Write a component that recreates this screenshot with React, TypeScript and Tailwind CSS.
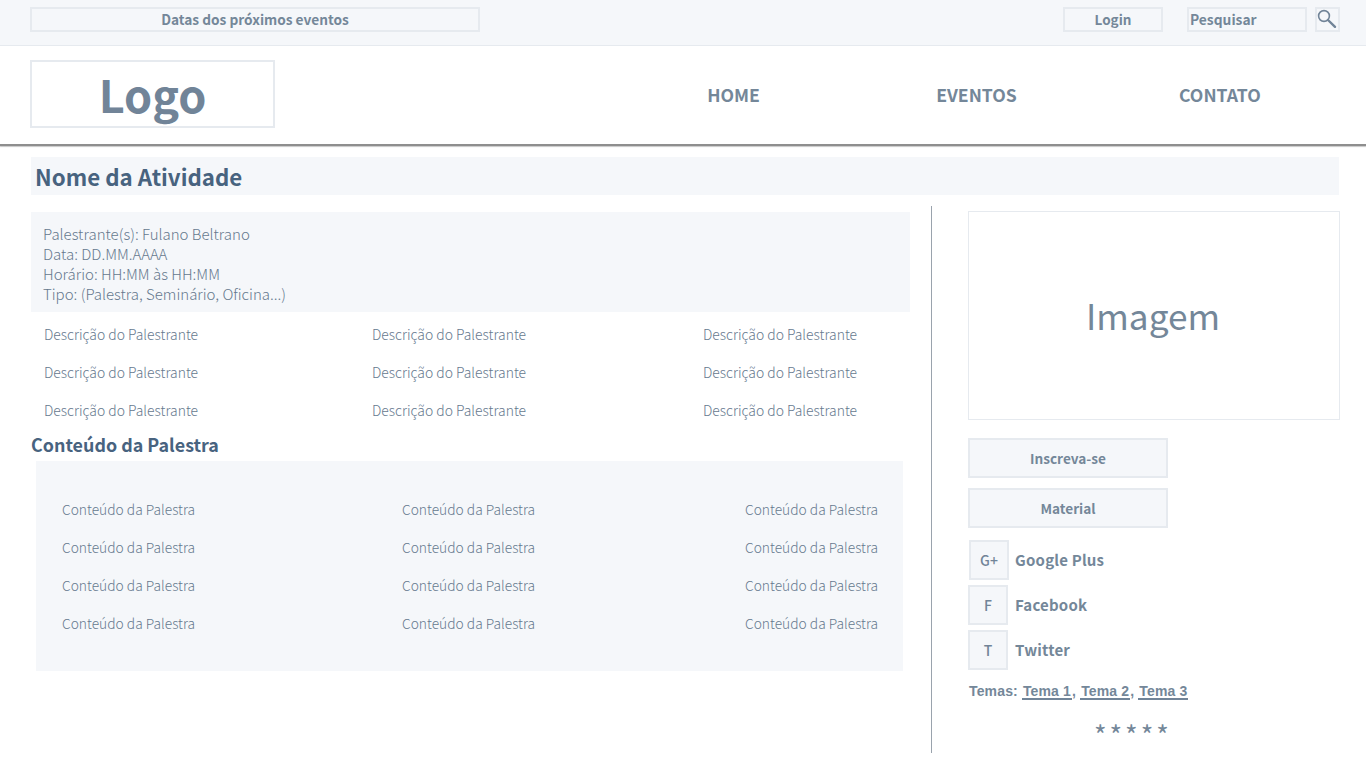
import React from "react";

const S = "font-['Noto_Sans_CJK_SC','Noto_Sans',sans-serif]";
const desc = [0, 1, 2];
const cont = [0, 1, 2, 3];

function Social({ k, label, extra }: { k: string; label: string; extra?: string }) {
  return (
    <div className={"flex items-center h-10 " + (extra || "")}>
      <div className="w-10 h-10 border-2 border-[#e6eaef] bg-[#f5f7fa] flex items-center justify-center text-[14px] font-medium text-[#718498] leading-none">{k}</div>
      <span className="text-[15px] font-bold text-[#748799] leading-none tracking-[0.2px] ml-[6px] pb-px">{label}</span>
    </div>
  );
}

export default function App() {
  return (
    <div className={"w-[1366px] h-[768px] overflow-hidden bg-white text-[#748799] " + S}>
      <div className="h-[46px] bg-[#f5f7fa] border-b border-[#e6eaef] pl-[30px] pt-[7px] flex">
        <div className="w-[450px] h-[25px] border-2 border-[#e6eaef] flex items-center justify-center text-[13.7px] font-bold leading-none">Datas dos próximos eventos</div>
        <div className="ml-[583px] w-[100px] h-[25px] border-2 border-[#e6eaef] flex items-center justify-center text-[13.5px] font-bold leading-none">Login</div>
        <div className="ml-[24px] w-[120px] h-[25px] border-2 border-[#e6eaef] flex items-center pl-px text-[13.8px] font-bold leading-none">Pesquisar</div>
        <div className="ml-[8px] w-[25px] h-[25px] border-2 border-[#e6eaef] flex items-start justify-center">
          <svg width="21" height="21" viewBox="0 0 21 21" fill="none">
            <circle cx="7" cy="7" r="5.4" stroke="#718498" strokeWidth="1.6" />
            <path d="M11 11 L18 17.8" stroke="#718498" strokeWidth="2.4" strokeLinecap="round" />
          </svg>
        </div>
      </div>
      <div className="h-[98px] pl-[30px] pt-[14px] flex">
        <div className="w-[245px] h-[68px] border-2 border-[#e6eaef] flex items-center justify-center text-[45px] font-bold leading-none pb-[2px] text-[#718498]">Logo</div>
        <nav className="text-[17.6px] font-bold leading-none flex items-center h-[70px]">
          <span className="ml-[432px] w-[53px] text-center whitespace-nowrap">HOME</span>
          <span className="ml-[176px] w-[81px] text-center whitespace-nowrap">EVENTOS</span>
          <span className="ml-[162px] w-[81px] text-center whitespace-nowrap">CONTATO</span>
        </nav>
      </div>
      <div className="h-[2px] bg-[#8e8e8e] shadow-[0_1px_1px_#c8c8c8]" />
      <div className="ml-[31px] mt-[11px] w-[1308px] h-[38px] bg-[#f5f7fa] pl-[4px] flex items-center text-[22.3px] font-bold leading-none text-[#48637f]">Nome da Atividade</div>
      <div className="flex mt-[11px] ml-[31px]">
        <div className="w-[879px] pt-[6px]">
          <div className="h-[100px] bg-[#f5f7fa] pl-[12px] pt-[12px] text-[15px] leading-[20px] font-light text-[#66798e]">
            <div>Palestrante(s): Fulano Beltrano</div>
            <div>Data: DD.MM.AAAA</div>
            <div>Horário: HH:MM às HH:MM</div>
            <div>Tipo: (Palestra, Seminário, Oficina...)</div>
          </div>
          <div className="mt-[3px] ml-[13px] grid grid-cols-[328px_331px_auto] text-[13.9px] leading-[38px] font-light text-[#66798e]">
            {desc.map((i) => (
              <React.Fragment key={i}>
                <div>Descrição do Palestrante</div>
                <div>Descrição do Palestrante</div>
                <div>Descrição do Palestrante</div>
              </React.Fragment>
            ))}
          </div>
          <div className="mt-[1px] h-[30px] flex items-center text-[17.9px] font-bold leading-none text-[#48637f]">Conteúdo da Palestra</div>
          <div className="mt-[1px] ml-[5px] w-[867px] h-[210px] bg-[#f5f7fa] pl-[26px] pt-[29px] grid grid-cols-[340px_343px_auto] content-start text-[13.8px] leading-[38px] font-light text-[#66798e]">
            {cont.map((i) => (
              <React.Fragment key={i}>
                <div>Conteúdo da Palestra</div>
                <div>Conteúdo da Palestra</div>
                <div>Conteúdo da Palestra</div>
              </React.Fragment>
            ))}
          </div>
        </div>
        <div className="ml-[21px] w-px h-[547px] bg-[#9aa3ad]" />
        <div className="ml-[36px] w-[372px] pt-[5px]">
          <div className="h-[209px] border border-[#e6eaef] flex items-center justify-center text-[35.2px] leading-none pb-px pr-[2px]">Imagem</div>
          <div className="mt-[18px] w-[200px] h-[40px] border-2 border-[#e6eaef] bg-[#f5f7fa] flex items-center justify-center text-[13.6px] font-bold leading-none pt-px">Inscreva-se</div>
          <div className="mt-[10px] w-[200px] h-[40px] border-2 border-[#e6eaef] bg-[#f5f7fa] flex items-center justify-center text-[13.6px] font-bold leading-none pt-px">Material</div>
          <Social k="G+" label="Google Plus" extra="mt-[12px] ml-px" />
          <Social k="F" label="Facebook" extra="mt-[5px] [&>span]:ml-[7px]" />
          <Social k="T" label="Twitter" extra="mt-[5px] [&>span]:ml-[7px]" />
          <div className="mt-[12px] ml-px text-[14px] leading-[18px] font-bold font-['Liberation_Sans',sans-serif] tracking-[0.15px] whitespace-nowrap">
            Temas: <span className="inline-block leading-[14px] border-b-2 border-[#718498] px-px">Tema 1</span>, <span className="inline-block leading-[14px] border-b-2 border-[#718498] px-px">Tema 2</span>, <span className="inline-block leading-[14px] border-b-2 border-[#718498] px-px">Tema 3</span>
          </div>
          <div className="mt-[23px] ml-[126px] text-[27px] leading-[24px] tracking-[-1.55px] whitespace-nowrap">* * * * *</div>
        </div>
      </div>
    </div>
  );
}
